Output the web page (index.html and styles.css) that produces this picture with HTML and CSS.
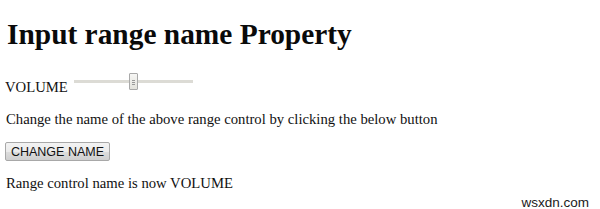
FILE: index.html
```html
<!DOCTYPE html>
<html>
<head>
<meta charset="utf-8">
<link rel="stylesheet" href="styles.css">
</head>
<body>
<h1 class="title">Input range name Property</h1>
<div class="row"><label class="label">VOLUME</label><input class="slider" type="range" name="VOLUME" min="0" max="100" value="50"></div>
<p class="text">Change the name of the above range control by clicking the below button</p>
<button class="btn" type="button">CHANGE NAME</button>
<p class="text last">Range control name is now VOLUME</p>
<div class="watermark">wsxdn.com</div>
</body>
</html>
```
FILE: styles.css
```css
html, body {
  background: #ffffff;
}
body {
  margin: 0 8px 0 5px;
  padding-top: 1px;
  font-family: "Liberation Serif", "Times New Roman", serif;
  font-size: 14.7px;
  color: #111;
}
.title {
  font-size: 29.4px;
  font-weight: bold;
  margin: 17px 0 0 2px;
  color: #0a0a0a;
}
.row {
  margin-top: 21px;
  line-height: 17px;
}
.label {
  vertical-align: baseline;
}
.slider {
  -webkit-appearance: none;
  appearance: none;
  width: 119px;
  height: 18px;
  margin: 0 0 0 6px;
  padding: 0;
  vertical-align: 2px;
  background: transparent;
}
.slider::-webkit-slider-runnable-track {
  height: 3px;
  background: #dcdbd5;
}
.slider::-webkit-slider-thumb {
  -webkit-appearance: none;
  width: 9px;
  height: 17px;
  margin-top: -7px;
  box-sizing: border-box;
  border: 1px solid #a9a9a9;
  border-radius: 1px;
  background:
    linear-gradient(#9a9a9a, #9a9a9a) center 6px / 3px 1px no-repeat,
    linear-gradient(#9a9a9a, #9a9a9a) center 8px / 3px 1px no-repeat,
    linear-gradient(#9a9a9a, #9a9a9a) center 10px / 3px 1px no-repeat,
    linear-gradient(#f6f6f4, #e3e2dc);
}
.text {
  margin: 15px 0 0 1px;
  line-height: 17px;
}
.btn {
  display: block;
  margin: 14px 0 0 0;
  padding: 0;
  width: 105px;
  height: 19px;
  white-space: nowrap;
  font-family: "Liberation Sans", Arial, sans-serif;
  font-size: 12.5px;
  color: #111;
  border: 1px solid #a8a8a8;
  border-radius: 2px;
  background: linear-gradient(#f3f3f3 0%, #ebebeb 50%, #dddddd 51%, #cfcfcf 100%);
}
.text.last {
  margin-top: 14px;
}
.watermark {
  position: absolute;
  right: 11px;
  bottom: 0;
  font-family: "Liberation Sans", Arial, sans-serif;
  font-size: 13.5px;
  line-height: 12px;
  color: #1a1a1a;
}
```
